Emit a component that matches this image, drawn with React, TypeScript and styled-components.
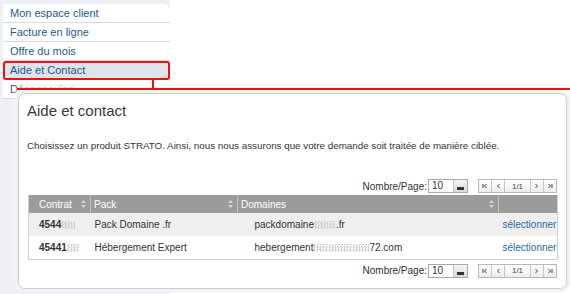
import React from "react";
import styled, { createGlobalStyle } from "styled-components";

const GlobalStyle = createGlobalStyle`
  html, body { margin: 0; padding: 0; background: #ffffff; }
  body { font-family: "Liberation Sans", Arial, sans-serif; }
`;

const Page = styled.div`
  position: relative;
  width: 570px;
  height: 294px;
  overflow: hidden;
  background: #ffffff;
`;

const Sidebar = styled.div`
  width: 170px;
  height: 294px;
  background: #eef0f4;
  padding-top: 4px;
  box-sizing: border-box;
`;

const Menu = styled.ul`
  list-style: none;
  margin: 0 0 0 3px;
  padding: 0;
  width: 167px;
  background: #ffffff;
  border-radius: 0 7px 7px 0;
  overflow: hidden;
`;

const MenuItem = styled.li<{ $active?: boolean }>`
  height: 19px;
  line-height: 18px;
  box-sizing: border-box;
  padding-left: 7px;
  font-size: 11px;
  color: #1f5a8e;
  border-bottom: 1px solid #d4dde7;
  background: ${(p) => (p.$active ? "#dfe3ea" : "#ffffff")};
  ${(p) => (p.$active ? "outline: 2px solid #ee1111; outline-offset: -2px; border-radius: 3px;" : "")}
`;

const Connector = styled.div<{ $v?: boolean }>`
  position: absolute;
  z-index: 2;
  background: #ee1111;
  ${(p) =>
    p.$v
      ? "left: 152px; top: 80px; width: 2px; height: 10px;"
      : "left: 17px; top: 88px; width: 553px; height: 2px;"}
`;

const Dialog = styled.div`
  position: absolute;
  z-index: 1;
  left: 18px;
  top: 93px;
  width: 549px;
  height: 196px;
  box-sizing: border-box;
  background: #ffffff;
  border: 1px solid #cfcfcf;
  border-radius: 7px;
  box-shadow: 0 0 0 3px rgba(238, 240, 244, 0.95), 0 -3px 4px 4px rgba(246, 247, 250, 0.9);
  padding: 0 9px 0 9px;
  display: flex;
  flex-direction: column;
`;

const Title = styled.h2`
  margin: 8px 0 0 -1px;
  font-size: 15px;
  line-height: 18px;
  font-weight: normal;
  color: #3a3a3a;
`;

const Intro = styled.p`
  margin: 19px 0 0 -1px;
  font-size: 9.8px;
  line-height: 13px;
  color: #333333;
`;

const PagerRow = styled.div<{ $top: number }>`
  margin-top: ${(p) => p.$top}px;
  height: 14px;
  display: flex;
  justify-content: flex-end;
  align-items: center;
  font-size: 10px;
  color: #333333;
`;

const PagerLabel = styled.span`
  margin-right: 1px;
`;

const Select = styled.div`
  width: 40px;
  height: 14px;
  box-sizing: border-box;
  border: 1px solid #a9a9a9;
  display: flex;
  align-items: stretch;
  font-size: 10px;
  background: #fff;
`;

const SelectValue = styled.span`
  flex: 1;
  padding-left: 3px;
  line-height: 12px;
`;

const SelectButton = styled.span`
  width: 14px;
  border-left: 1px solid #c4c4c4;
  background: linear-gradient(#f4f4f4, #d9d9d9);
  display: flex;
  align-items: flex-end;
  justify-content: center;
  padding-bottom: 2px;
  box-sizing: border-box;
`;

const Nav = styled.div`
  margin-left: 10px;
  display: flex;
  height: 14px;
  border: 1px solid #b8b8b8;
  box-sizing: border-box;
`;

const NavBtn = styled.span<{ $w: number }>`
  width: ${(p) => p.$w}px;
  height: 12px;
  display: flex;
  align-items: center;
  justify-content: center;
  font-size: 8px;
  color: #444;
  background: linear-gradient(#ffffff, #ececec);
  & + & { border-left: 1px solid #c8c8c8; }
`;

const Table = styled.table`
  margin-top: 2px;
  width: 529px;
  border-collapse: collapse;
  table-layout: fixed;
  font-size: 10px;
  border-left: 1px solid #cfcfcf;
  border-right: 1px solid #cfcfcf;
  border-bottom: 1px solid #cfcfcf;
`;

const Th = styled.th<{ $pl: number }>`
  box-sizing: border-box;
  height: 18px;
  padding: 0 4px 0 ${(p) => p.$pl}px;
  background: #9b9b9b;
  color: #ffffff;
  font-weight: normal;
  text-align: left;
  border-left: 1px solid #c2c2c2;
  &:first-child { border-left: none; }
`;

const ThInner = styled.div`
  display: flex;
  justify-content: space-between;
  align-items: center;
`;

const Tr = styled.tr<{ $alt?: boolean }>`
  height: 23px;
  background: ${(p) => (p.$alt ? "#efefef" : "#ffffff")};
`;

const Td = styled.td<{ $pl?: number; $bold?: boolean; $link?: boolean; $right?: boolean }>`
  box-sizing: border-box;
  padding: 0 3px 0 ${(p) => p.$pl ?? 4}px;
  color: ${(p) => (p.$link ? "#2b6aa3" : "#333333")};
  font-weight: ${(p) => (p.$bold ? "bold" : "normal")};
  text-align: ${(p) => (p.$right ? "right" : "left")};
  white-space: nowrap;
  overflow: hidden;
`;

const Blur = styled.span<{ $w: number }>`
  display: inline-block;
  width: ${(p) => p.$w}px;
  height: 8px;
  vertical-align: -1px;
  background-image: repeating-conic-gradient(#c9c9c9 0 25%, transparent 0 50%);
  background-size: 3px 3px;
  opacity: 0.8;
`;

const SortIcon = () => (
  <svg width="5" height="8" viewBox="0 0 5 8">
    <path d="M2.5 0 L5 3 L0 3 Z M0 5 L5 5 L2.5 8 Z" fill="#d4d4d4" />
  </svg>
);

const DropArrow = () => (
  <svg width="7" height="3" viewBox="0 0 7 3">
    <rect x="0" y="0" width="7" height="3" fill="#333" />
  </svg>
);

const Chevron = ({ dir, bar }: { dir: "l" | "r"; bar?: boolean }) => (
  <svg width="6" height="6" viewBox="0 0 6 6">
    {dir === "l" ? (
      <>
        {bar && <rect x="0.5" y="1" width="1" height="4" fill="#444" />}
        <path d="M4.5 1 L2.5 3 L4.5 5" stroke="#444" fill="none" strokeWidth="1" />
      </>
    ) : (
      <>
        <path d="M1.5 1 L3.5 3 L1.5 5" stroke="#444" fill="none" strokeWidth="1" />
        {bar && <rect x="4.5" y="1" width="1" height="4" fill="#444" />}
      </>
    )}
  </svg>
);

const Pager = ({ top }: { top: number }) => (
  <PagerRow $top={top}>
    <PagerLabel>Nombre/Page:</PagerLabel>
    <Select>
      <SelectValue>10</SelectValue>
      <SelectButton>
        <DropArrow />
      </SelectButton>
    </Select>
    <Nav>
      <NavBtn $w={12}>
        <Chevron dir="l" bar />
      </NavBtn>
      <NavBtn $w={12}>
        <Chevron dir="l" />
      </NavBtn>
      <NavBtn $w={25}>1/1</NavBtn>
      <NavBtn $w={12}>
        <Chevron dir="r" />
      </NavBtn>
      <NavBtn $w={12}>
        <Chevron dir="r" bar />
      </NavBtn>
    </Nav>
  </PagerRow>
);

const rows = [
  { c: "4544", cb: 14, pack: "Pack Domaine .fr", d1: "packdomaine", db: 22, d2: ".fr" },
  { c: "45441", cb: 12, pack: "Hébergement Expert", d1: "hebergement", db: 56, d2: "72.com" },
];

export default function App() {
  return (
    <Page>
      <GlobalStyle />
      <Sidebar>
        <Menu>
          <MenuItem>Mon espace client</MenuItem>
          <MenuItem>Facture en ligne</MenuItem>
          <MenuItem>Offre du mois</MenuItem>
          <MenuItem $active>Aide et Contact</MenuItem>
          <MenuItem>Déconnexion</MenuItem>
        </Menu>
      </Sidebar>
      <Dialog>
        <Title>Aide et contact</Title>
        <Intro>
          Choisissez un produit STRATO. Ainsi, nous nous assurons que votre demande soit traitée de manière ciblée.
        </Intro>
        <Pager top={27} />
        <Table>
          <colgroup>
            <col style={{ width: 62 }} />
            <col style={{ width: 147 }} />
            <col style={{ width: 261 }} />
            <col style={{ width: 59 }} />
          </colgroup>
          <thead>
            <tr>
              <Th $pl={10}>
                <ThInner>
                  Contrat <SortIcon />
                </ThInner>
              </Th>
              <Th $pl={3}>
                <ThInner>
                  Pack <SortIcon />
                </ThInner>
              </Th>
              <Th $pl={3}>
                <ThInner>
                  Domaines <SortIcon />
                </ThInner>
              </Th>
              <Th $pl={3} />
            </tr>
          </thead>
          <tbody>
            {rows.map((r, i) => (
              <Tr key={i} $alt={i === 0}>
                <Td $pl={10} $bold>
                  {r.c}
                  <Blur $w={r.cb} />
                </Td>
                <Td $pl={4}>{r.pack}</Td>
                <Td $pl={17}>
                  {r.d1}
                  <Blur $w={r.db} />
                  {r.d2}
                </Td>
                <Td $link $right>
                  sélectionner
                </Td>
              </Tr>
            ))}
          </tbody>
        </Table>
        <Pager top={4} />
      </Dialog>
      <Connector $v />
      <Connector />
    </Page>
  );
}
